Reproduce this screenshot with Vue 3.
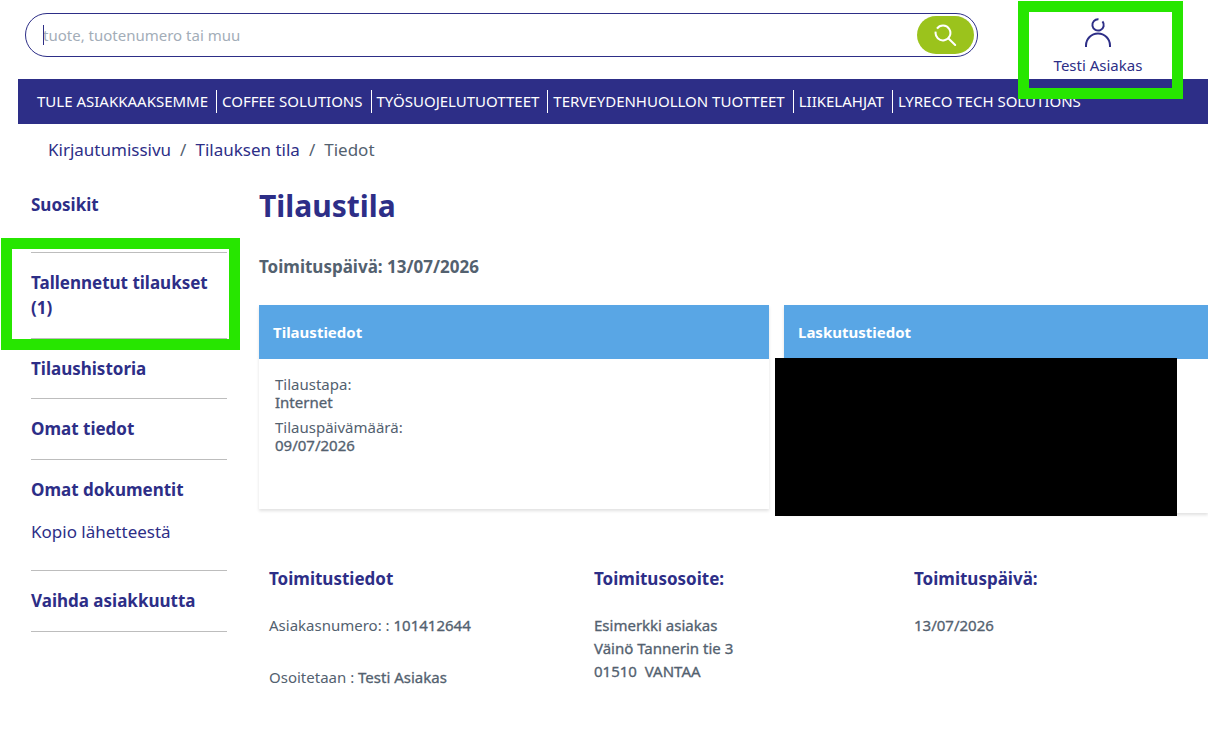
<script setup>
import { ref } from 'vue'

const query = ref('')
const categories = [
  'TULE ASIAKKAAKSEMME',
  'COFFEE SOLUTIONS',
  'TYÖSUOJELUTUOTTEET',
  'TERVEYDENHUOLLON TUOTTEET',
  'LIIKELAHJAT',
  'LYRECO TECH SOLUTIONS',
]
const menu = [
  { label: 'Suosikit' },
  { label: 'Tallennetut tilaukset (1)', marked: true },
  { label: 'Tilaushistoria' },
  { label: 'Omat tiedot' },
  { label: 'Omat dokumentit', child: 'Kopio lähetteestä' },
  { label: 'Vaihda asiakkuutta' },
]
</script>

<template>
  <div class="page">
    <header class="top">
      <form class="search" role="search" @submit.prevent>
        <input v-model="query" type="text" aria-label="Haku" placeholder="tuote, tuotenumero tai muu" />
        <span class="caret"></span>
        <button type="submit" aria-label="Hae">
          <svg viewBox="0 0 24 24" width="24" height="24" fill="none" stroke="#fff" stroke-width="2">
            <path d="M3 5.600A7.400 7.400 0 1 1 1.700 8.600" />
            <path d="M14.500 15.500L21.200 22" stroke-linecap="round" />
          </svg>
        </button>
      </form>
      <a class="account" href="#">
        <svg viewBox="0 0 28 32" width="28" height="32" fill="none" stroke="#2d2e87" stroke-width="2">
          <path d="M14.500 3.200A5.700 5.700 0 1 0 18.500 5.300" />
          <path d="M2 31V29.500A12 12 0 0 1 26 29.500V31" />
        </svg>
        <span>Testi Asiakas</span>
        <i class="marker"></i>
      </a>
    </header>

    <nav class="categories" aria-label="Tuotteet">
      <a v-for="c in categories" :key="c" href="#">{{ c }}</a>
    </nav>

    <nav class="crumbs" aria-label="Murupolku">
      <a href="#">Kirjautumissivu</a><span class="slash">/</span>
      <a href="#">Tilauksen tila</a><span class="slash">/</span>
      <span>Tiedot</span>
    </nav>

    <div class="body">
      <aside class="side">
        <ul>
          <li v-for="m in menu" :key="m.label">
            <a class="main-link" href="#">{{ m.label }}</a>
            <a v-if="m.child" class="child" href="#">{{ m.child }}</a>
            <i v-if="m.marked" class="marker"></i>
          </li>
        </ul>
      </aside>

      <main>
        <h1>Tilaustila</h1>
        <p class="date">Toimituspäivä: 13/07/2026</p>

        <div class="cards">
          <section class="card">
            <h2>Tilaustiedot</h2>
            <dl>
              <dt>Tilaustapa:</dt>
              <dd>Internet</dd>
              <dt>Tilauspäivämäärä:</dt>
              <dd>09/07/2026</dd>
            </dl>
          </section>
          <section class="card billing">
            <h2>Laskutustiedot</h2>
            <div class="content"></div>
            <div class="redaction"></div>
          </section>
        </div>

        <div class="delivery">
          <section>
            <h3>Toimitustiedot</h3>
            <p>Asiakasnumero: : <b>101412644</b></p>
            <p class="recipient">Osoitetaan : <b>Testi Asiakas</b></p>
          </section>
          <section>
            <h3>Toimitusosoite:</h3>
            <p><b>Esimerkki asiakas<br />Väinö Tannerin tie 3<br />01510&nbsp; VANTAA</b></p>
          </section>
          <section>
            <h3>Toimituspäivä:</h3>
            <p><b>13/07/2026</b></p>
          </section>
        </div>
      </main>
    </div>
  </div>
</template>

<style>
body {
  margin: 0;
  background: #fff;
}
</style>

<style scoped>
.page {
  box-sizing: border-box;
  font-family: "Noto Sans", sans-serif;
  font-size: 15px;
  color: #53616f;
  overflow: hidden;
}
.page * {
  box-sizing: border-box;
}
a {
  color: #2d2e87;
  text-decoration: none;
}
h1, h2, h3, p, ul, dl, dd {
  margin: 0;
  padding: 0;
}
.marker {
  position: absolute;
  border: 11px solid #27e600;
  pointer-events: none;
  z-index: 2;
}

.top {
  display: flex;
  align-items: flex-start;
  height: 79px;
  padding: 13px 25px 0;
}
.search {
  position: relative;
  flex: 1;
  display: flex;
  align-items: center;
  height: 44px;
  padding: 0 3px 0 17px;
  border: 1px solid #2d2e87;
  border-radius: 22px;
}
.search input {
  flex: 1;
  min-width: 0;
  height: 32px;
  padding: 0;
  border: 0;
  outline: 0;
  background: none;
  font: inherit;
  color: #2d2e87;
}
.search input::placeholder {
  color: #a3adb8;
  opacity: 1;
}
.caret {
  position: absolute;
  left: 17px;
  top: 11px;
  width: 1px;
  height: 20px;
  background: #2d2e87;
}
.search button {
  display: flex;
  align-items: center;
  justify-content: center;
  width: 57px;
  height: 38px;
  padding: 0;
  border: 0;
  border-radius: 19px;
  background: #9bc31c;
}
.account {
  position: relative;
  display: flex;
  flex-direction: column;
  align-items: center;
  width: 165px;
  margin-left: 40px;
  padding: 3px 5px 0 0;
  line-height: 20px;
}
.account span {
  margin-top: 7px;
}
.account .marker {
  inset: -12px 0 -24px;
}

.categories {
  display: flex;
  align-items: center;
  height: 45px;
  margin-left: 18px;
  padding-left: 19px;
  background: #2d2e87;
  white-space: nowrap;
}
.categories a {
  color: #fff;
  line-height: 23px;
  padding-right: 8px;
}
.categories a + a {
  padding-left: 5px;
  border-left: 1px solid #fff;
}

.crumbs {
  display: flex;
  padding: 13px 48px 0;
  font-size: 17px;
  line-height: 26px;
}
.slash {
  margin: 0 9px;
}

.body {
  display: flex;
  padding-top: 23px;
}
.side {
  flex: none;
  width: 196px;
  margin-left: 31px;
  margin-right: 32px;
}
.side ul {
  list-style: none;
}
.side li {
  position: relative;
  padding: 17px 0 18px;
  border-bottom: 1px solid #bdbdbd;
  font-size: 17px;
  line-height: 25px;
}
.side li:first-child {
  padding: 6px 0 35px;
}
.side li:nth-child(3) {
  padding-bottom: 17px;
}
.side a {
  display: block;
}
.main-link {
  font-weight: 700;
}
.child {
  margin: 17px 0 8px;
}
.side .marker {
  inset: -15px -13px -12px -30px;
}

main {
  flex: 1;
  min-width: 0;
}
h1 {
  font-size: 30px;
  line-height: 40px;
  font-weight: 700;
  color: #2d2e87;
}
.date {
  margin-top: 28px;
  font-size: 17px;
  line-height: 26px;
  font-weight: 700;
}
.cards {
  display: grid;
  grid-template-columns: 510fr 424fr;
  gap: 15px;
  align-items: start;
  margin-top: 25px;
}
.card {
  position: relative;
  box-shadow: 0 2px 3px rgba(0, 0, 0, 0.12);
}
.card h2 {
  padding: 14px;
  background: #59a6e5;
  color: #fff;
  font-size: 15px;
  line-height: 26px;
  font-weight: 700;
}
.card dl {
  min-height: 150px;
  padding: 16px;
  line-height: 18px;
}
.card dd {
  margin-bottom: 7px;
}
.card dd,
.delivery b {
  font-weight: 400;
  -webkit-text-stroke: thin currentColor;
}
.content {
  min-height: 154px;
}
.redaction {
  position: absolute;
  inset: 53px 31px -3px -9px;
  background: #000;
}

.delivery {
  display: grid;
  grid-template-columns: 325fr 320fr 294fr;
  margin-top: 53px;
  padding-left: 10px;
}
.delivery h3 {
  margin-bottom: 22px;
  font-size: 17px;
  line-height: 26px;
  font-weight: 700;
  color: #2d2e87;
}
.delivery p {
  line-height: 23px;
}
.delivery .recipient {
  margin-top: 29px;
}
</style>
